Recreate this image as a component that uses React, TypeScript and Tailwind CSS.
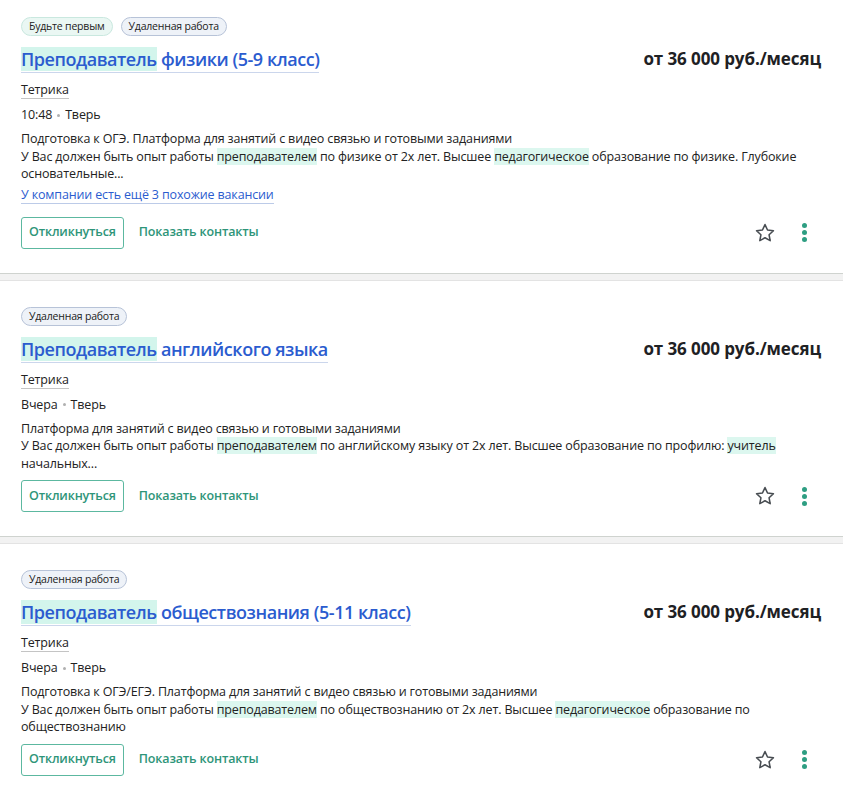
import React from "react";

type Seg = { t: string; h?: boolean };

type Job = {
  badges: { label: string; kind: "green" | "blue" }[];
  titleHl: string;
  titleRest: string;
  company: string;
  time: string;
  city: string;
  desc1: string;
  desc2: Seg[];
  similar?: string;
  first?: boolean;
};

const jobs: Job[] = [
  {
    first: true,
    badges: [
      { label: "Будьте первым", kind: "green" },
      { label: "Удаленная работа", kind: "blue" },
    ],
    titleHl: "Преподаватель",
    titleRest: " физики (5-9 класс)",
    company: "Тетрика",
    time: "10:48",
    city: "Тверь",
    desc1: "Подготовка к ОГЭ. Платформа для занятий с видео связью и готовыми заданиями",
    desc2: [
      { t: "У Вас должен быть опыт работы " },
      { t: "преподавателем", h: true },
      { t: " по физике от 2х лет. Высшее " },
      { t: "педагогическое", h: true },
      { t: " образование по физике. Глубокие основательные..." },
    ],
    similar: "У компании есть ещё 3 похожие вакансии",
  },
  {
    badges: [{ label: "Удаленная работа", kind: "blue" }],
    titleHl: "Преподаватель",
    titleRest: " английского языка",
    company: "Тетрика",
    time: "Вчера",
    city: "Тверь",
    desc1: "Платформа для занятий с видео связью и готовыми заданиями",
    desc2: [
      { t: "У Вас должен быть опыт работы " },
      { t: "преподавателем", h: true },
      { t: " по английскому языку от 2х лет. Высшее образование по профилю: " },
      { t: "учитель", h: true },
      { t: " начальных..." },
    ],
  },
  {
    badges: [{ label: "Удаленная работа", kind: "blue" }],
    titleHl: "Преподаватель",
    titleRest: " обществознания (5-11 класс)",
    company: "Тетрика",
    time: "Вчера",
    city: "Тверь",
    desc1: "Подготовка к ОГЭ/ЕГЭ. Платформа для занятий с видео связью и готовыми заданиями",
    desc2: [
      { t: "У Вас должен быть опыт работы " },
      { t: "преподавателем", h: true },
      { t: " по обществознанию от 2х лет. Высшее " },
      { t: "педагогическое", h: true },
      { t: " образование по обществознанию" },
    ],
  },
];

function Star() {
  return (
    <svg width="22" height="22" viewBox="0 0 24 24" fill="none" stroke="#484d52" strokeWidth="1.7" strokeLinejoin="round">
      <path d="M12 2.8l2.75 5.9 6.45.8-4.75 4.45 1.2 6.4L12 17.2l-5.65 3.15 1.2-6.4L2.8 9.5l6.45-.8z" />
    </svg>
  );
}

function Dots() {
  return (
    <div className="flex flex-col gap-[2px] items-center">
      <span className="w-[5px] h-[5px] rounded-full bg-[#2e9e82]" />
      <span className="w-[5px] h-[5px] rounded-full bg-[#2e9e82]" />
      <span className="w-[5px] h-[5px] rounded-full bg-[#2e9e82]" />
    </div>
  );
}

function Card({ job }: { job: Job }) {
  return (
    <div className={`bg-white pl-[21px] pr-[22px] pb-[24px] ${job.first ? "pt-[17px]" : "pt-[26px]"}`}>
      <div className="flex gap-[8px]">
        {job.badges.map((b) => (
          <span
            key={b.label}
            className={`h-[19px] px-[7px] rounded-full text-[10.5px] tracking-[-0.2px] leading-[17px] text-[#222] border ${
              b.kind === "green" ? "bg-[#eaf7f3] border-[#c9e8df]" : "bg-[#eef2f8] border-[#b7c3d8]"
            }`}
          >
            {b.label}
          </span>
        ))}
      </div>
      <div className="flex justify-between items-start mt-[10px]">
        <a className="text-[18px] tracking-[-0.45px] leading-[26px] text-[#2b5ccf] border-b border-[#cbd6ec] font-semibold">
          <span className="bg-[#d3f5ec]">{job.titleHl}</span>
          {job.titleRest}
        </a>
        <div className="text-[17px] tracking-[-0.1px] leading-[26px] font-bold text-[#1e2124]">от 36 000 руб./месяц</div>
      </div>
      <div className="mt-[3px]">
        <span className="text-[12.5px] tracking-[-0.15px] leading-[18px] text-[#222] border-b border-[#c4c4c4]">
          {job.company}
        </span>
      </div>
      <div className="mt-[6px] text-[12.5px] tracking-[-0.15px] leading-[18px] text-[#222] flex items-center">
        <span>{job.time}</span>
        <span className="mx-[5px] w-[3px] h-[3px] rounded-full bg-[#b0b0b0]" />
        <span>{job.city}</span>
      </div>
      <div className="mt-[6px] text-[12.5px] tracking-[-0.15px] leading-[17.5px] text-[#222] pr-[20px]">
        <div>{job.desc1}</div>
        <div>
          {job.desc2.map((s, i) =>
            s.h ? (
              <span key={i} className="bg-[#dcf7ef]">
                {s.t}
              </span>
            ) : (
              <span key={i}>{s.t}</span>
            )
          )}
        </div>
      </div>
      {job.similar && (
        <div className="mt-[-2px] mb-[12px]">
          <a className="text-[12.5px] tracking-[-0.15px] leading-[18px] text-[#2b5ccf] border-b border-[#bccbe8]">
            {job.similar}
          </a>
        </div>
      )}
      <div className="flex items-center mt-[8px]">
        <button className="h-[32px] px-[7px] border border-[#5cb8a0] rounded-[3px] text-[12.5px] tracking-[-0.15px] font-semibold text-[#2e9579]">
          Откликнуться
        </button>
        <button className="ml-[15px] text-[12.5px] tracking-[-0.15px] font-semibold text-[#2e9579]">
          Показать контакты
        </button>
        <div className="ml-auto mr-[14px] flex items-center">
          <Star />
          <div className="ml-[26px]">
            <Dots />
          </div>
        </div>
      </div>
    </div>
  );
}

export default function App() {
  return (
    <div className="w-[843px] min-h-[788px] bg-white" style={{ fontFamily: '"Open Sans", "Noto Sans", sans-serif' }}>
      {jobs.map((j, i) => (
        <React.Fragment key={i}>
          <Card job={j} />
          {i < jobs.length - 1 && (
            <div className="h-[8px] bg-[#f2f2f2] border-t border-[#cfd3cf] border-b border-b-[#e3e3e3]" />
          )}
        </React.Fragment>
      ))}
    </div>
  );
}
